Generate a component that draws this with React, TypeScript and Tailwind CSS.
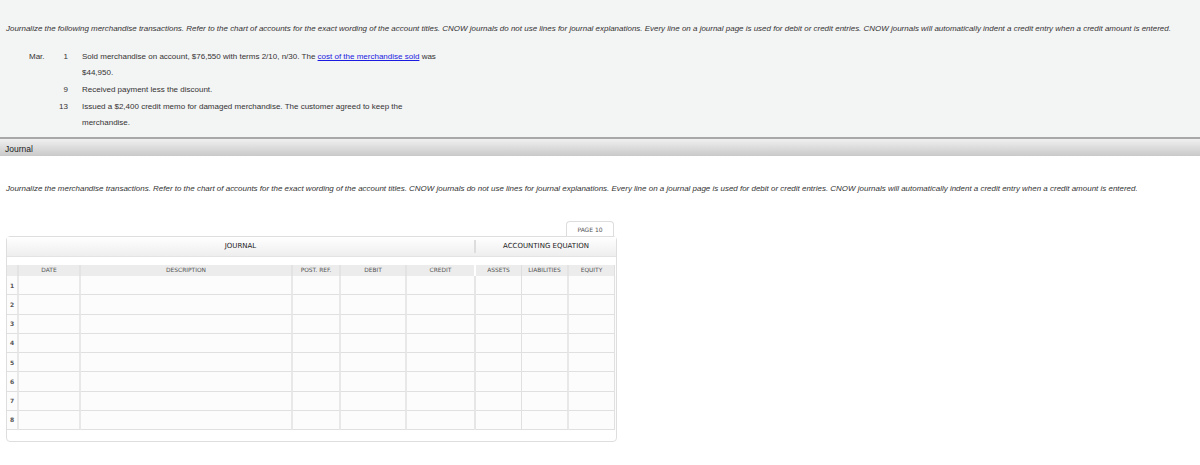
import React from 'react';

const columns = 'grid grid-cols-[12px_62px_212px_48px_66px_67px_2px_46px_47px_46px]';
const thick = 'border-r-2 border-b border-r-[#e8e8e8] border-b-[#e0e0e0]';
const thin = 'border-r border-b border-r-[#e0e0e0] border-b-[#e0e0e0]';
const headCell = 'flex items-center justify-center h-[11px] bg-[#ececec] text-[5.9px] text-[#555]';
const rows = [1, 2, 3, 4, 5, 6, 7, 8];

export default function App() {
    return (
        <div className="w-[1200px] h-[465px] bg-white overflow-hidden font-['Liberation_Sans',sans-serif] text-[#333]">
            <section className="h-[137px] bg-[#f3f4f4] pt-[24px] pl-[6px]">
                <p className="text-[7.98px] leading-[10px] italic whitespace-nowrap">
                    Journalize the following merchandise transactions. Refer to the chart of accounts for the exact wording of the account titles. CNOW journals do not use lines for journal explanations. Every line on a journal page is used for debit or credit entries. CNOW journals will automatically indent a credit entry when a credit amount is entered.
                </p>
                <div className="mt-[15px] ml-[23px] w-[420px] grid grid-cols-[23px_16px_1fr] gap-y-[1px] text-[8px] leading-[16px]">
                    <span>Mar.</span>
                    <span className="text-right">1</span>
                    <p className="ml-[14px] w-[360px]">
                        Sold merchandise on account, $76,550 with terms 2/10, n/30. The <a className="text-[#1a1ae0] underline">cost of the merchandise sold</a> was $44,950.
                    </p>
                    <span />
                    <span className="text-right">9</span>
                    <p className="ml-[14px]">Received payment less the discount.</p>
                    <span />
                    <span className="text-right">13</span>
                    <p className="ml-[14px] w-[360px]">
                        Issued a $2,400 credit memo for damaged merchandise. The customer agreed to keep the merchandise.
                    </p>
                </div>
            </section>

            <div className="h-[19px] border-t-2 border-[#a8a8a8] bg-gradient-to-b from-[#f0f0f0] to-[#c9c9c9] pl-[5px] text-[8.5px] leading-[20px] text-[#222]">
                Journal
            </div>

            <p className="mt-[28px] pl-[6px] text-[7.98px] leading-[10px] italic whitespace-nowrap">
                Journalize the merchandise transactions. Refer to the chart of accounts for the exact wording of the account titles. CNOW journals do not use lines for journal explanations. Every line on a journal page is used for debit or credit entries. CNOW journals will automatically indent a credit entry when a credit amount is entered.
            </p>

            <div className="mt-[27px] ml-[6px] w-[611px] font-['DejaVu_Sans',sans-serif]">
                <div className="flex justify-end pr-[3px]">
                    <div className="w-[48px] h-[15px] bg-white border border-b-0 border-[#ddd] rounded-t-sm flex items-center justify-center text-[6px] text-[#555]">
                        PAGE 10
                    </div>
                </div>

                <div className="h-[206px] border border-[#dedede] rounded-sm">
                    <div className="flex h-[20px] bg-gradient-to-b from-white to-[#eeeeee] border-b border-[#e3e3e3] text-[7px] text-[#222]">
                        <div className="w-[467px] flex items-center justify-center">JOURNAL</div>
                        <div className="flex-1 flex items-center justify-center border-l-2 border-[#ddd] my-[3px]">ACCOUNTING EQUATION</div>
                    </div>

                    <div className={`${columns} mt-[8px]`}>
                        <div className={`${headCell} border-r-2 border-[#e3e3e3]`} />
                        <div className={`${headCell} border-r-2 border-[#e3e3e3]`}>DATE</div>
                        <div className={`${headCell} border-r-2 border-[#e3e3e3]`}>DESCRIPTION</div>
                        <div className={`${headCell} border-r-2 border-[#e3e3e3]`}>POST. REF.</div>
                        <div className={`${headCell} border-r-2 border-[#e3e3e3]`}>DEBIT</div>
                        <div className={headCell}>CREDIT</div>
                        <div className="h-[11px] bg-white" />
                        <div className={`${headCell} border-r border-[#dedede]`}>ASSETS</div>
                        <div className={`${headCell} border-r-2 border-[#e3e3e3]`}>LIABILITIES</div>
                        <div className={`${headCell} border-r border-[#dedede]`}>EQUITY</div>
                    </div>

                    {rows.map((n) => (
                        <div key={n} className={`${columns} h-[19.25px] bg-[#fcfcfc]`}>
                            <div className={`${thick} flex items-center justify-center text-[6px] font-bold text-[#555]`}>{n}</div>
                            <div className={thick} />
                            <div className={thick} />
                            <div className={thick} />
                            <div className={thick} />
                            <div className={`${thin} border-r-0`} />
                            <div className="bg-[#e6e6e6]" />
                            <div className={thin} />
                            <div className={thick} />
                            <div className={thin} />
                        </div>
                    ))}
                </div>
            </div>
        </div>
    );
}
